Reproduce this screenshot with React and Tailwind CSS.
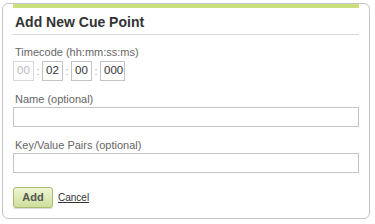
import React from "react";

export default function App() {
  const font = { fontFamily: '"Liberation Sans", Arial, sans-serif' };
  return (
    <div className="w-[375px] h-[224px] bg-white" style={font}>
      <div className="ml-[2px] pt-[3px]">
        <div className="w-[368px] h-[216px] border border-[#c4c4c4] rounded-[6px] px-[10px] flex flex-col">
          <div className="h-[4px] bg-[#c9e07d]" />
          <div className="mt-[5px] pb-[3px] border-b border-[#d6d6d6]">
            <div className="text-[14px] leading-[18px] font-bold text-[#333] pl-[2px]">Add New Cue Point</div>
          </div>
          <div className="mt-[11px] text-[11px] leading-[13px] text-[#666] pl-[2px]">Timecode (hh:mm:ss:ms)</div>
          <div className="mt-[2px] flex items-center">
            <div className="w-[21px] h-[20px] border border-[#d8d8d8] text-[11.5px] text-[#bbb] flex items-center pl-[3px]">00</div>
            <span className="w-[8px] text-center text-[11px] text-[#aaa]">:</span>
            <div className="w-[21px] h-[20px] border border-[#c4c4c4] text-[11.5px] text-[#333] flex items-center pl-[3px]">02</div>
            <span className="w-[8px] text-center text-[11px] text-[#aaa]">:</span>
            <div className="w-[21px] h-[20px] border border-[#c4c4c4] text-[11.5px] text-[#333] flex items-center pl-[3px]">00</div>
            <span className="w-[8px] text-center text-[11px] text-[#aaa]">:</span>
            <div className="w-[25px] h-[20px] border border-[#c4c4c4] text-[11.5px] text-[#333] flex items-center pl-[3px]">000</div>
          </div>
          <div className="mt-[12px] text-[11px] leading-[13px] text-[#666] pl-[2px]">Name (optional)</div>
          <div className="mt-[1px] h-[20px] border border-[#c4c4c4]" />
          <div className="mt-[12px] text-[11px] leading-[13px] text-[#666] pl-[2px]">Key/Value Pairs (optional)</div>
          <div className="mt-[1px] h-[20px] border border-[#c4c4c4]" />
          <div className="mt-[14px] flex items-center gap-[5px]">
            <button className="w-[40px] h-[21px] rounded-[3px] border border-[#a9bb74] bg-gradient-to-b from-[#eef5d4] to-[#cddf98] text-[11px] font-bold text-[#555] shadow-[0_1px_1px_rgba(0,0,0,0.15)]">Add</button>
            <a className="text-[10px] text-[#333] underline">Cancel</a>
          </div>
        </div>
      </div>
    </div>
  );
}
